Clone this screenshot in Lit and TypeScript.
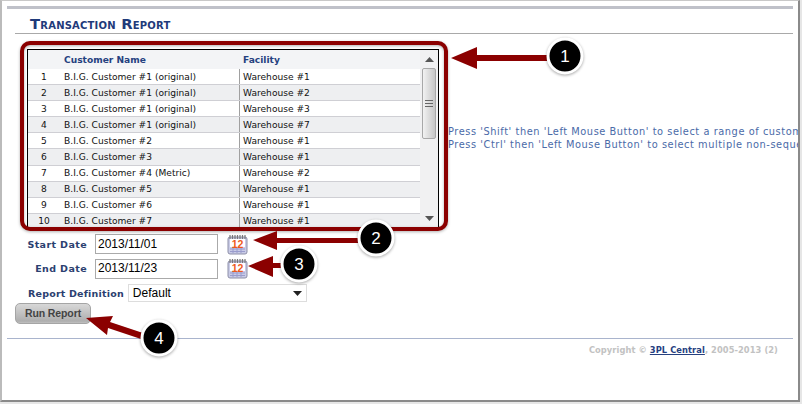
import { LitElement, html, css, svg } from "lit";
import { customElement } from "lit/decorators.js";

const rows = [
  ["1", "B.I.G. Customer #1 (original)", "Warehouse #1"],
  ["2", "B.I.G. Customer #1 (original)", "Warehouse #2"],
  ["3", "B.I.G. Customer #1 (original)", "Warehouse #3"],
  ["4", "B.I.G. Customer #1 (original)", "Warehouse #7"],
  ["5", "B.I.G. Customer #2", "Warehouse #1"],
  ["6", "B.I.G. Customer #3", "Warehouse #1"],
  ["7", "B.I.G. Customer #4 (Metric)", "Warehouse #2"],
  ["8", "B.I.G. Customer #5", "Warehouse #1"],
  ["9", "B.I.G. Customer #6", "Warehouse #1"],
  ["10", "B.I.G. Customer #7", "Warehouse #1"],
];

const calendar = html`<svg class="cal" width="21" height="21" viewBox="0 0 21 21">
  <rect x="1" y="3" width="19" height="17" rx="2" fill="#c9cbe6" stroke="#8d8fa8"/>
  <rect x="3" y="5" width="15" height="8" fill="#fff"/>
  <path d="M3 15h15M3 17.500h15M6 13v6M10 13v6M14 13v6" stroke="#9a9ccc" stroke-width="1" fill="none"/>
  <path d="M3 1v4M5.500 1v4M8 1v4M10.500 1v4M13 1v4M15.500 1v4M18 1v4" stroke="#777" stroke-width="1.200"/>
  <text x="10.500" y="14" text-anchor="middle" font-family="Liberation Sans, sans-serif" font-weight="700" font-size="10.500" fill="#ee5a1c">12</text>
</svg>`;

function badge(cx: number, cy: number, n: string) {
  return svg`<circle cx=${cx} cy=${cy + 1} r="18.500" fill="#000" opacity=".35" filter="url(#blur)"/>
    <circle cx=${cx} cy=${cy} r="17" fill="#000" stroke="#fff" stroke-width="3"/>
    <text x=${cx} y=${cy + 6} text-anchor="middle" font-family="Liberation Sans, sans-serif" font-size="17" fill="#fff">${n}</text>`;
}

@customElement("app-root")
export class AppRoot extends LitElement {
  static styles = css`
    :host { display: block; width: 802px; height: 404px; background: #e6e6e6; position: relative; overflow: hidden; font-family: "DejaVu Sans", Verdana, sans-serif; }
    .frame { box-sizing: border-box; width: 800px; height: 402px; background: #fff; border: 1px solid #c8c8c8; border-left: 2px solid #bbb; border-right: 2px solid #8a8a8a; border-bottom: 2px solid #8a8a8a; padding: 5px 5px 0 5px; overflow: hidden; }
    .topbar { height: 3px; background: #bfc1c9; }
    .title { margin: 5px 0 0 8px; padding: 0 0 1px 15px; border-bottom: 1px solid #a9a9a9; font: 700 14.800px/20px "DejaVu Sans", sans-serif; font-variant: small-caps; color: #1f3a7a; height: 18px; letter-spacing: .2px; }
    .main { display: flex; margin: 15px 0 0 20px; height: 177px; align-items: flex-start; white-space: nowrap; }
    .grid { box-sizing: border-box; flex: none; width: 412px; height: 178px; border: 1px solid #000; border-bottom: none; display: flex; background: #fff; }
    .table { flex: none; width: 392px; }
    .head, .row { display: grid; grid-template-columns: 36px 175px 1fr; align-items: center; font-size: 9.100px; }
    .head { height: 19px; background: #f3f4f6; font-weight: 700; color: #25417f; }
    .row { height: 16.100px; color: #111; border-bottom: 1px solid #cfcfd4; box-sizing: border-box; }
    .row.alt { background: #eeeff1; }
    .num { text-align: center; padding-right: 4px; }
    .fac { border-left: 1px solid #a0a0a0; padding-left: 3px; height: 100%; display: flex; align-items: center; }
    .head .fac { border: none; padding-left: 4px; }
    .sb { flex: 1; background: #f1f1f2; position: relative; display: flex; flex-direction: column; align-items: center; }
    .up, .down { height: 18px; display: flex; align-items: center; justify-content: center; flex: none; }
    .thumb { box-sizing: border-box; width: 14px; height: 71px; border: 1px solid #a8a8a8; border-radius: 2px; background: linear-gradient(90deg, #f2f2f2, #c6c6c6); display: flex; align-items: center; justify-content: center; }
    .spacer { flex: 1; }
    .help { margin: 76px 0 0 9px; font-size: 9.800px; line-height: 13px; color: #4a6aa8; letter-spacing: .56px; }
    .form { margin: 6px 0 0 0; }
    .line { display: flex; align-items: center; height: 24.500px; }
    .lab { flex: none; width: 80px; text-align: right; font-size: 9.500px; font-weight: 700; color: #2b4070; letter-spacing: .4px; }
    .inp { box-sizing: border-box; width: 123px; height: 20px; margin-left: 8px; border: 1px solid #aaa; font: 12px "Liberation Sans", sans-serif; color: #000; padding: 0 2px; line-height: 17px; display: flex; align-items: center; }
    .cal { margin-left: 9px; flex: none; }
    .def { margin-top: 3px; height: 18px; }
    .def .lab { width: auto; margin-left: 21px; letter-spacing: .2px; }
    .sel { box-sizing: border-box; width: 179px; height: 18px; margin-left: 4px; border: 1px solid #ddd; font: 12px "Liberation Sans", sans-serif; padding-left: 4px; display: flex; align-items: center; justify-content: space-between; padding-right: 4px; }
    .btn { box-sizing: border-box; margin: 1px 0 0 8px; width: 76px; height: 21px; border: 1px solid #a5a5a5; border-radius: 5px; background: linear-gradient(#d8d8d8, #aeaeae 90%, #c0c0c0); color: #444; font: 700 10.500px/19px "Liberation Sans", sans-serif; letter-spacing: -.1px; text-align: center; }
    .rule { margin-top: 14px; height: 1px; background: #a9b4cd; }
    .copy { margin-top: 6px; padding-right: 15px; text-align: right; font-size: 8.300px; font-weight: 700; color: #c2c2c2; letter-spacing: .08px; }
    .copy a { color: #26407f; text-decoration: underline; }
    .overlay { position: absolute; left: 0; top: 0; pointer-events: none; }
  `;

  render() {
    return html`
      <div class="frame">
        <div class="topbar"></div>
        <div class="title">Transaction Report</div>
        <div class="main">
          <div class="grid">
            <div class="table">
              <div class="head"><span></span><span>Customer Name</span><span class="fac">Facility</span></div>
              ${rows.map((r, i) => html`<div class="row ${i % 2 ? "alt" : ""}"><span class="num">${r[0]}</span><span>${r[1]}</span><span class="fac">${r[2]}</span></div>`)}
            </div>
            <div class="sb">
              <div class="up"><svg width="9" height="5"><path d="M4.500 0L9 5H0z" fill="#555"/></svg></div>
              <div class="thumb"><svg width="8" height="8"><path d="M0 .5h8M0 3.500h8M0 6.500h8" stroke="#666"/></svg></div>
              <div class="spacer"></div>
              <div class="down"><svg width="9" height="5"><path d="M0 0H9L4.500 5z" fill="#555"/></svg></div>
            </div>
          </div>
          <div class="help">Press 'Shift' then 'Left Mouse Button' to select a range of customers.<br>Press 'Ctrl' then 'Left Mouse Button' to select multiple non-sequential customers.</div>
        </div>
        <div class="form">
          <div class="line"><span class="lab">Start Date</span><span class="inp">2013/11/01</span>${calendar}</div>
          <div class="line"><span class="lab">End Date</span><span class="inp">2013/11/23</span>${calendar}</div>
          <div class="line def"><span class="lab">Report Definition</span><span class="sel">Default<svg width="9" height="5"><path d="M0 0H9L4.500 5z" fill="#222"/></svg></span></div>
          <div class="btn">Run Report</div>
        </div>
        <div class="rule"></div>
        <div class="copy">Copyright © <a>3PL Central</a>, 2005-2013 (2)</div>
      </div>
      <svg class="overlay" width="802" height="404" viewBox="0 0 802 404">
        <defs><filter id="blur" x="-30%" y="-30%" width="160%" height="160%"><feGaussianBlur stdDeviation="1.500"/></filter></defs>
        <rect x="22" y="43" width="424" height="186" rx="8" fill="none" stroke="#000" stroke-opacity=".3" stroke-width="4" filter="url(#blur)" transform="translate(0 1)"/>
        <rect x="22" y="43" width="424" height="186" rx="8" fill="none" stroke="#8b0000" stroke-width="4"/>
        <g fill="#8b0000" stroke="none">
          <path d="M451 58L477 47V55H552V61H477V69z"/>
          <path d="M253 240L277 231V238H362V243H277V250z"/>
          <path d="M248 266L273 256V263H285V268H273V277z"/>
          <path d="M86 318L113 316L110 322L146 334L144 340L108 328L107 335z"/>
        </g>
        ${badge(565, 56, "1")}
        ${badge(376, 238, "2")}
        ${badge(299, 264, "3")}
        ${badge(159, 338, "4")}
      </svg>
    `;
  }
}
